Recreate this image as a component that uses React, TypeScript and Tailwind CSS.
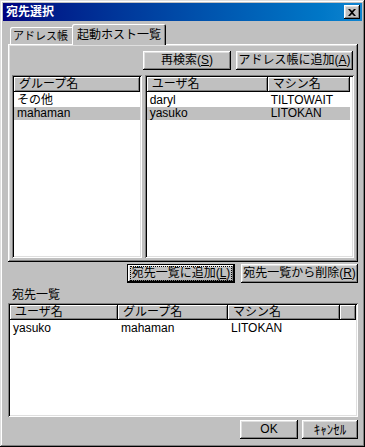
import React from "react";

const raised =
  "shadow-[inset_-1px_-1px_0_#000,inset_1px_1px_0_#fff,inset_-2px_-2px_0_#808080,inset_2px_2px_0_#dfdfdf]";
const sunken =
  "shadow-[inset_1px_1px_0_#808080,inset_-1px_-1px_0_#fff,inset_2px_2px_0_#000,inset_-2px_-2px_0_#dfdfdf]";
const headerCell =
  "h-[15px] shrink-0 whitespace-nowrap overflow-hidden bg-[#c0c0c0] px-[5px] leading-[15px] shadow-[inset_-1px_-1px_0_#000,inset_1px_1px_0_#fff,inset_-2px_-2px_0_#808080]";
const row = "h-[13px] leading-[13px] whitespace-nowrap";

function Btn({
  w,
  children,
  focused,
}: {
  w: string;
  children: React.ReactNode;
  focused?: boolean;
}) {
  if (focused) {
    return (
      <div className={`${w} h-[19px] border border-black bg-[#c0c0c0] ${raised} flex items-center justify-center whitespace-nowrap`}>
        <div className="border border-dotted border-black px-[1px] leading-[13px]">{children}</div>
      </div>
    );
  }
  return (
    <div className={`${w} h-[19px] bg-[#c0c0c0] ${raised} flex items-center justify-center leading-[19px] whitespace-nowrap`}>
      {children}
    </div>
  );
}

export default function App() {
  return (
    <div className="w-[365px] h-[447px] bg-[#c0c0c0] p-[3px] text-[12px] text-black font-['Liberation_Sans','Noto_Sans_CJK_JP',sans-serif] shadow-[inset_-1px_-1px_0_#000,inset_1px_1px_0_#dfdfdf,inset_-2px_-2px_0_#808080,inset_2px_2px_0_#fff] flex flex-col">
      {/* title bar */}
      <div className="h-[18px] bg-gradient-to-r from-[#000080] to-[#1084d0] flex items-center justify-between pl-[3px] pr-[2px]">
        <span className="text-white font-bold text-[12px] leading-[18px]">宛先選択</span>
        <div className={`w-[16px] h-[14px] bg-[#c0c0c0] ${raised} flex items-center justify-center`}>
          <svg width="8" height="7" viewBox="0 0 8 7">
            <path d="M0 0h2l2 2 2-2h2L5 3.5 8 7H6L4 5 2 7H0l3-3.5z" fill="#000" />
          </svg>
        </div>
      </div>

      {/* tabs */}
      <div className="ml-[5px] mt-[3px] h-[20px] flex items-end">
        <div className="w-[64px] h-[17px] ml-[2px] bg-[#c0c0c0] rounded-t-[2px] shadow-[inset_1px_1px_0_#fff,inset_-1px_0_0_#000,inset_-2px_0_0_#808080] flex items-center pl-[3px] text-[11px] leading-[16px] whitespace-nowrap">
          アドレス帳
        </div>
        <div className="w-[94px] h-[21px] -ml-[2px] -mb-[1px] bg-[#c0c0c0] relative z-10 rounded-t-[2px] shadow-[inset_1px_1px_0_#fff,inset_-1px_0_0_#000,inset_-2px_0_0_#808080] flex items-center justify-center leading-[18px] whitespace-nowrap">
          起動ホスト一覧
        </div>
      </div>

      {/* tab panel */}
      <div className={`ml-[5px] w-[350px] h-[218px] ${raised} pt-[7px] px-[4px] pb-[4px] flex flex-col`}>
        <div className="flex justify-end gap-[5px] pr-[1px]">
          <Btn w="w-[88px]">
            再検索(<u>S</u>)
          </Btn>
          <Btn w="w-[117px]">
            アドレス帳に追加(<u>A</u>)
          </Btn>
        </div>
        <div className="mt-[5px] flex gap-[3px] flex-1">
          <div className={`w-[130px] bg-white ${sunken} p-[2px] flex flex-col`}>
            <div className={`${headerCell} w-full`}>グループ名</div>
            <div className={`${row} mt-[2px] px-[3px]`}>その他</div>
            <div className={`${row} px-[3px] bg-[#c0c0c0]`}>mahaman</div>
          </div>
          <div className={`w-[210px] bg-white ${sunken} p-[2px] flex flex-col`}>
            <div className="flex">
              <div className={`${headerCell} w-[121px]`}>ユーザ名</div>
              <div className={`${headerCell} w-[82px]`}>マシン名</div>
            </div>
            <div className={`${row} mt-[2px] flex w-[203px]`}>
              <div className="w-[121px] px-[3px]">daryl</div>
              <div className="px-[3px]">TILTOWAIT</div>
            </div>
            <div className={`${row} flex bg-[#c0c0c0] w-[203px]`}>
              <div className="w-[121px] px-[3px]">yasuko</div>
              <div className="px-[3px]">LITOKAN</div>
            </div>
          </div>
        </div>
      </div>

      {/* add / remove */}
      <div className="mt-[2px] flex justify-end gap-[6px] pr-[4px]">
        <Btn w="w-[108px]" focused>
          宛先一覧に追加(<u>L</u>)
        </Btn>
        <Btn w="w-[117px]">
          宛先一覧から削除(<u>R</u>)
        </Btn>
      </div>

      <div className="ml-[9px] mt-[4px] leading-[16px]">宛先一覧</div>

      {/* destination list */}
      <div className={`ml-[5px] w-[350px] h-[114px] bg-white ${sunken} p-[2px] flex flex-col`}>
        <div className="flex">
          <div className={`${headerCell} w-[108px]`}>ユーザ名</div>
          <div className={`${headerCell} w-[110px]`}>グループ名</div>
          <div className={`${headerCell} w-[112px]`}>マシン名</div>
          <div className={`${headerCell} flex-1`}></div>
        </div>
        <div className={`${row} mt-[2px] flex`}>
          <div className="w-[108px] px-[3px]">yasuko</div>
          <div className="w-[110px] px-[3px]">mahaman</div>
          <div className="px-[3px]">LITOKAN</div>
        </div>
      </div>

      {/* OK / cancel */}
      <div className="mt-[3px] flex justify-end gap-[4px] pr-[4px]">
        <Btn w="w-[58px]">OK</Btn>
        <Btn w="w-[56px]">
          <span className="text-[13px]">ｷｬﾝｾﾙ</span>
        </Btn>
      </div>
    </div>
  );
}
